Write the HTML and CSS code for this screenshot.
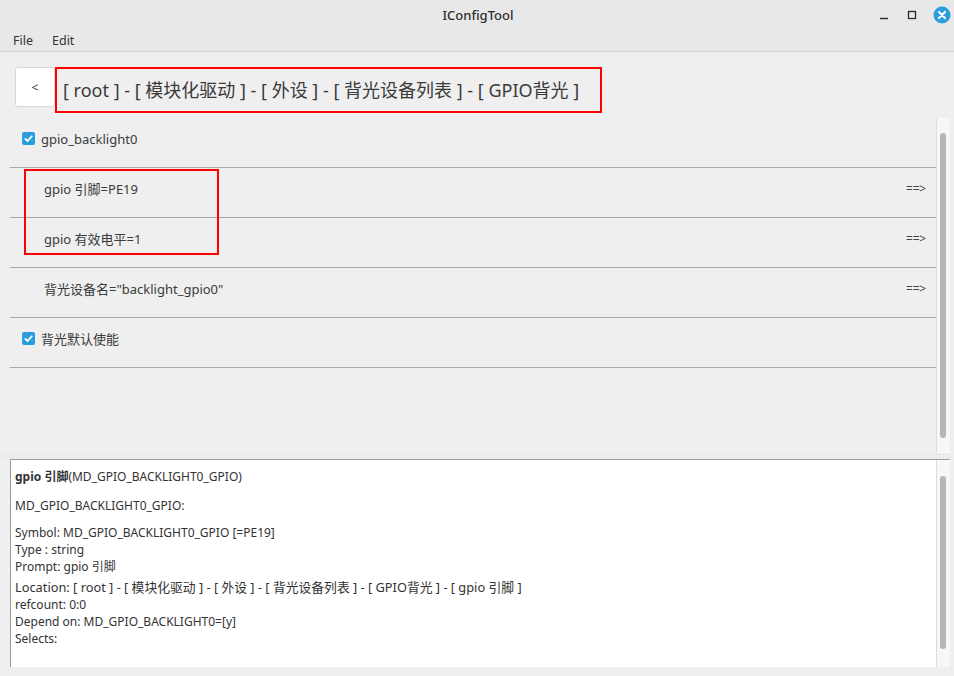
FILE: index.html
```html
<!DOCTYPE html>
<html>
  <head>
    <title>IConfigTool</title>
    <link rel="stylesheet" href="styles.css">
  </head>
  <body>
    <div class="window">
      <div class="titlebar">
        <span class="title">IConfigTool</span>
        <div class="controls">
          <svg class="ctl" width="14" height="14" viewBox="0 0 14 14"><line x1="3" y1="10.5" x2="11" y2="10.5" stroke="#2b2b2b" stroke-width="1.4"/></svg>
          <svg class="ctl" width="14" height="14" viewBox="0 0 14 14"><rect x="3.5" y="3.5" width="7" height="7" fill="none" stroke="#2b2b2b" stroke-width="1.3"/></svg>
          <svg class="ctl close" width="18" height="18" viewBox="0 0 18 18"><circle cx="9" cy="9" r="8.5" fill="#2a9de0"/><path d="M6 6 L12 12 M12 6 L6 12" stroke="#fff" stroke-width="2.2" stroke-linecap="round"/></svg>
        </div>
      </div>
      <div class="menubar">
        <span class="menu">File</span>
        <span class="menu">Edit</span>
      </div>

      <div class="content">
        <div class="crumbs">
          <button class="back">&lt;</button>
          <div class="path">[ root ] - [ 模块化驱动 ] - [ 外设 ] - [ 背光设备列表 ] - [ GPIO背光 ]</div>
        </div>

        <div class="listwrap">
          <ul class="items">
            <li class="item">
              <span class="check"><svg width="13" height="13" viewBox="0 0 13 13"><path d="M3.3 6.8 L5.5 9 L9.8 4.3" fill="none" stroke="#fff" stroke-width="1.8" stroke-linecap="round" stroke-linejoin="round"/></svg></span>
              <span>gpio_backlight0</span>
            </li>
            <li class="item value"><span>gpio 引脚=PE19</span><span class="go">==&gt;</span></li>
            <li class="item value"><span>gpio 有效电平=1</span><span class="go">==&gt;</span></li>
            <li class="item value"><span>背光设备名="backlight_gpio0"</span><span class="go">==&gt;</span></li>
            <li class="item">
              <span class="check"><svg width="13" height="13" viewBox="0 0 13 13"><path d="M3.3 6.8 L5.5 9 L9.8 4.3" fill="none" stroke="#fff" stroke-width="1.8" stroke-linecap="round" stroke-linejoin="round"/></svg></span>
              <span>背光默认使能</span>
            </li>
          </ul>
          <div class="scroll"><div class="thumb"></div></div>
          <div class="mark"></div>
        </div>

        <div class="splitter"></div>

        <div class="info">
          <div class="text">
            <p><b>gpio 引脚</b>(MD_GPIO_BACKLIGHT0_GPIO)</p>
            <p>MD_GPIO_BACKLIGHT0_GPIO:</p>
            <div class="block">
              <div>Symbol: MD_GPIO_BACKLIGHT0_GPIO [=PE19]</div>
              <div>Type : string</div>
              <div>Prompt: gpio 引脚</div>
              <div class="loc">Location: [ root ] - [ 模块化驱动 ] - [ 外设 ] - [ 背光设备列表 ] - [ GPIO背光 ] - [ gpio 引脚 ]</div>
              <div>refcount: 0:0</div>
              <div>Depend on: MD_GPIO_BACKLIGHT0=[y]</div>
              <div>Selects:</div>
            </div>
          </div>
          <div class="scroll small"><div class="thumb"></div></div>
        </div>
      </div>
    </div>
  </body>
</html>
```

FILE: styles.css
```css
body {
  margin: 0;
  font-family: "Noto Sans", "Noto Sans CJK SC", sans-serif;
  color: #3a3a3a;
  background: #efefef;
}

.window { width: 954px; height: 676px; display: flex; flex-direction: column; overflow: hidden; }

.titlebar {
  height: 30px; background: #e8e8e8; position: relative;
  display: flex; align-items: center; justify-content: center;
}
.title { font-size: 13px; font-weight: 500; color: #2e2e2e; margin-left: 2px; }
.controls { position: absolute; right: 3px; top: 6px; display: flex; align-items: center; gap: 14px; }
.ctl { display: block; }

.menubar {
  height: 21px; background: #e8e8e8; border-bottom: 1px solid #d2d2d2;
  display: flex; align-items: center; padding-left: 13px; gap: 19px;
}
.menu { font-size: 12.5px; color: #333; }

.content { flex: 1; display: flex; flex-direction: column; background: #efefef; }

.crumbs { display: flex; margin: 15px 0 0 15px; height: 46px; }
.back {
  width: 40px; height: 40px; background: #fff; border: 1px solid #d6d6d6; border-radius: 3px;
  font-family: inherit; font-size: 12px; color: #333; padding: 0;
}
.path {
  box-sizing: border-box; width: 547px; height: 46px; border: 2px solid #ff0000;
  display: flex; align-items: center; padding: 0 0 2px 6px;
  font-size: 18px; color: #3a3a3a; white-space: nowrap;
}

.listwrap { position: relative; margin: 5px 4px 0 10px; height: 335px; display: flex; }
.items { list-style: none; margin: 0; padding: 0; flex: 1; }
.item {
  box-sizing: border-box; height: 50px; border-bottom: 1px solid #a9a9a9;
  display: flex; align-items: center; padding: 0 0 8px 12px; font-size: 13px;
}
.item.value { padding-left: 34px; justify-content: space-between; padding-right: 10px; }
.go { font-size: 12px; color: #444; letter-spacing: -0.2px; }
.check {
  width: 13px; height: 13px; background: #2a9de0; border-radius: 2px; margin-right: 6px;
  display: flex;
}
.mark {
  position: absolute; left: 14px; top: 51px; width: 191px; height: 82px;
  border: 2px solid #ff0000;
}

.scroll { width: 13px; background: #f7f7f7; border-left: 1px solid #dcdcdc; position: relative; }
.thumb { position: absolute; left: 3px; top: 15px; width: 6px; height: 305px; background: #b6b6b6; border-radius: 3px; }
.scroll.small .thumb { top: 16px; height: 173px; }

.splitter {
  height: 6px;
  background-image: radial-gradient(#d9d9d9 0.7px, transparent 0.9px);
  background-size: 3px 3px;
}

.info {
  margin: 0 4px 0 10px; height: 207px; background: #fff;
  border-top: 1px solid #9a9a9a; border-left: 1px solid #9a9a9a;
  display: flex;
}
.text { flex: 1; padding: 8px 0 0 4px; font-size: 12px; color: #333; }
.text p { margin: 0 0 12px; line-height: 17px; }
.text p + p { margin-bottom: 10px; }
.text b { font-weight: 700; }
.block div { line-height: 17px; }
.block .loc { font-size: 12.8px; line-height: 18px; margin-top: 3px; }
```
